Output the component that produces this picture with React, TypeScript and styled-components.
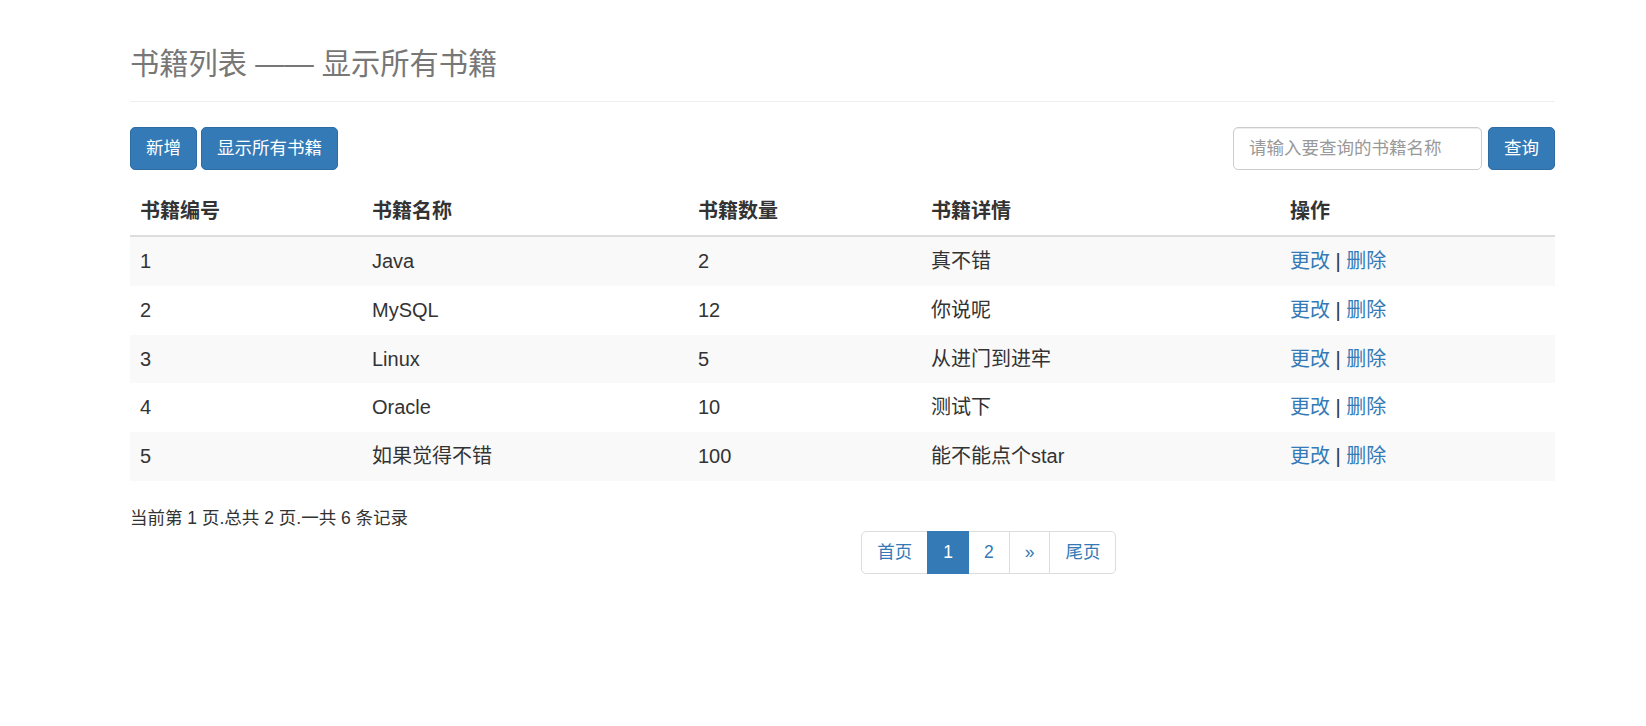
import styled, { createGlobalStyle } from "styled-components";

const GlobalStyle = createGlobalStyle`
  html, body {
    margin: 0;
    padding: 0;
    background: #fff;
  }
  body {
    font-family: "Liberation Sans", "Noto Sans CJK SC", sans-serif;
    font-size: 17.5px;
    line-height: 1.42857;
    color: #333;
  }
  * { box-sizing: border-box; }
`;

const Page = styled.div`
  width: 1425px;
  margin-left: 130px;
  padding-top: 46px;
`;

const PageHeader = styled.div`
  border-bottom: 1px solid #eee;
  padding-bottom: 18.5px;
  margin-bottom: 25.5px;
`;

const Title = styled.h1`
  margin: 0;
  font-size: 29.25px;
  font-weight: 400;
  line-height: 36px;
  color: #777;
`;

const Toolbar = styled.div`
  display: flex;
  align-items: center;
  justify-content: space-between;
  margin-bottom: 17px;
`;

const Group = styled.div<{ $gap: number }>`
  display: flex;
  align-items: center;
  gap: ${({ $gap }) => $gap}px;
`;

const Button = styled.button`
  height: 43px;
  padding: 0 15px;
  font-family: inherit;
  font-size: 17.5px;
  line-height: 1.42857;
  color: #fff;
  background: #337ab7;
  border: 1px solid #2e6da4;
  border-radius: 5px;
  cursor: pointer;
`;

const SearchInput = styled.input`
  width: 249px;
  height: 43px;
  padding: 0 15px;
  font-family: inherit;
  font-size: 17.5px;
  color: #555;
  border: 1px solid #ccc;
  border-radius: 5px;
  box-shadow: inset 0 1px 1px rgba(0, 0, 0, 0.075);
  outline: none;
  &::placeholder {
    color: #999;
  }
`;

const Table = styled.table`
  width: 100%;
  border-collapse: collapse;
  border-spacing: 0;
  table-layout: fixed;
  margin-bottom: 25px;
`;

const HeadCell = styled.th<{ $w: number }>`
  width: ${({ $w }) => $w}px;
  text-align: left;
  font-weight: 700;
  padding: 10px;
  line-height: 28px;
  font-size: 20px;
  border-bottom: 2px solid #ddd;
`;

const Row = styled.tr<{ $striped: boolean }>`
  background: ${({ $striped }) => ($striped ? "#f9f9f9" : "transparent")};
  & + & td {
    border-top: 1px solid #ddd;
  }
`;

const Cell = styled.td`
  padding: 10px;
  line-height: 28.8px;
  font-size: 20px;
  vertical-align: top;
`;

const Link = styled.a`
  color: #337ab7;
  text-decoration: none;
  cursor: pointer;
`;

const Footer = styled.div`
  display: flex;
`;

const Half = styled.div<{ $pad: number }>`
  width: 50%;
  padding-left: ${({ $pad }) => $pad}px;
`;

const Info = styled.div`
  font-size: 17.5px;
  line-height: 25px;
`;

const Pagination = styled.ul`
  display: flex;
  list-style: none;
  margin: 25px 0;
  padding: 0;
`;

const PageItem = styled.li<{ $active?: boolean }>`
  & + & {
    margin-left: -1px;
  }
  a {
    display: block;
    height: 43px;
    padding: 0 15px;
    line-height: 41px;
    font-size: 17.5px;
    color: ${({ $active }) => ($active ? "#fff" : "#337ab7")};
    background: ${({ $active }) => ($active ? "#337ab7" : "#fff")};
    border: 1px solid ${({ $active }) => ($active ? "#337ab7" : "#ddd")};
    text-decoration: none;
    position: relative;
    z-index: ${({ $active }) => ($active ? 2 : 1)};
  }
  &:first-child a {
    border-radius: 5px 0 0 5px;
  }
  &:last-child a {
    border-radius: 0 5px 5px 0;
  }
`;

const columns = [
  { title: "书籍编号", w: 232 },
  { title: "书籍名称", w: 326 },
  { title: "书籍数量", w: 233 },
  { title: "书籍详情", w: 359 },
  { title: "操作", w: 275 },
];

const books = [
  { id: 1, name: "Java", count: 2, detail: "真不错" },
  { id: 2, name: "MySQL", count: 12, detail: "你说呢" },
  { id: 3, name: "Linux", count: 5, detail: "从进门到进牢" },
  { id: 4, name: "Oracle", count: 10, detail: "测试下" },
  { id: 5, name: "如果觉得不错", count: 100, detail: "能不能点个star" },
];

const pages = [
  { label: "首页" },
  { label: "1", active: true },
  { label: "2" },
  { label: "»" },
  { label: "尾页" },
];

export default function App() {
  return (
    <>
      <GlobalStyle />
      <Page>
        <PageHeader>
          <Title>书籍列表 —— 显示所有书籍</Title>
        </PageHeader>

        <Toolbar>
          <Group $gap={4}>
            <Button>新增</Button>
            <Button>显示所有书籍</Button>
          </Group>
          <Group $gap={6}>
            <SearchInput placeholder="请输入要查询的书籍名称" />
            <Button>查询</Button>
          </Group>
        </Toolbar>

        <Table>
          <thead>
            <tr>
              {columns.map((c) => (
                <HeadCell key={c.title} $w={c.w}>
                  {c.title}
                </HeadCell>
              ))}
            </tr>
          </thead>
          <tbody>
            {books.map((b, i) => (
              <Row key={b.id} $striped={i % 2 === 0}>
                <Cell>{b.id}</Cell>
                <Cell>{b.name}</Cell>
                <Cell>{b.count}</Cell>
                <Cell>{b.detail}</Cell>
                <Cell>
                  <Link>更改</Link> | <Link>删除</Link>
                </Cell>
              </Row>
            ))}
          </tbody>
        </Table>

        <Footer>
          <Half $pad={0}>
            <Info>当前第 1 页.总共 2 页.一共 6 条记录</Info>
          </Half>
          <Half $pad={18.75}>
            <Pagination>
              {pages.map((p) => (
                <PageItem key={p.label} $active={p.active}>
                  <a>{p.label}</a>
                </PageItem>
              ))}
            </Pagination>
          </Half>
        </Footer>
      </Page>
    </>
  );
}
